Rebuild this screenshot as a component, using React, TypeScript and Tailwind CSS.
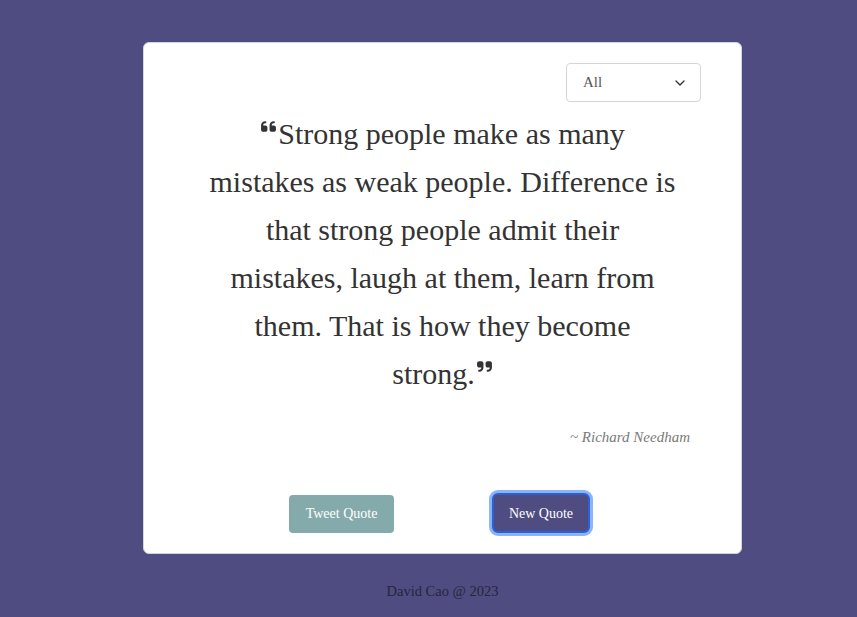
import { ChevronDown } from "lucide-react";

function QuoteLeft({ className }: { className?: string }) {
  return (
    <svg viewBox="0 0 448 512" className={className} fill="currentColor">
      <path d="M0 216C0 149.7 53.7 96 120 96h8c17.7 0 32 14.3 32 32s-14.3 32-32 32h-8c-30.9 0-56 25.1-56 56v8h64c35.3 0 64 28.7 64 64v64c0 35.3-28.7 64-64 64H64c-35.3 0-64-28.7-64-64V216zm256 0c0-66.3 53.7-120 120-120h8c17.7 0 32 14.3 32 32s-14.3 32-32 32h-8c-30.9 0-56 25.1-56 56v8h64c35.3 0 64 28.7 64 64v64c0 35.3-28.7 64-64 64h-64c-35.3 0-64-28.7-64-64V216z" />
    </svg>
  );
}

function QuoteRight({ className }: { className?: string }) {
  return (
    <svg viewBox="0 0 448 512" className={className} fill="currentColor">
      <path d="M448 296c0 66.3-53.7 120-120 120h-8c-17.7 0-32-14.3-32-32s14.3-32 32-32h8c30.9 0 56-25.1 56-56v-8h-64c-35.3 0-64-28.7-64-64v-64c0-35.3 28.7-64 64-64h64c35.3 0 64 28.7 64 64v136zm-256 0c0 66.3-53.7 120-120 120h-8c-17.7 0-32-14.3-32-32s14.3-32 32-32h8c30.9 0 56-25.1 56-56v-8H64c-35.3 0-64-28.7-64-64v-64c0-35.3 28.7-64 64-64h64c35.3 0 64 28.7 64 64v136z" />
    </svg>
  );
}

export default function App() {
  return (
    <div
      className="min-h-[617px] w-full bg-[#4f4c82] pt-[42px]"
      style={{ fontFamily: '"Liberation Serif", serif' }}
    >
      {/* Quote card */}
      <div className="ml-[143px] w-[599px] h-[512px] rounded-md border border-gray-300 bg-white flex flex-col">
        <div className="flex justify-end pt-[20px] pr-[40px]">
          <div className="w-[135px] h-[39px] rounded border border-gray-300 flex items-center justify-between pl-[16px] pr-[12px] text-[15px] text-[#555]">
            <span>All</span>
            <ChevronDown className="w-[16px] h-[16px] text-[#333]" strokeWidth={2} />
          </div>
        </div>

        <div className="mx-auto w-[540px] mt-[8px] text-center text-[30px] leading-[48px] text-[#333]">
          <QuoteLeft className="inline-block w-[17px] h-[17px] align-[9px] mr-[1px]" />
          Strong people make as many
          <br />
          mistakes as weak people. Difference is
          <br />
          that strong people admit their
          <br />
          mistakes, laugh at them, learn from
          <br />
          them. That is how they become
          <br />
          strong.
          <QuoteRight className="inline-block w-[17px] h-[17px] align-[9px] ml-[1px]" />
        </div>

        <div className="mt-[28px] pr-[51px] text-right italic text-[15px] text-[#7a7a7a]">
          ~ Richard Needham
        </div>

        <div className="mt-auto mb-[20px] flex items-center">
          <button className="ml-[145px] w-[105px] h-[38px] mt-[1px] rounded bg-[#85aaab] text-white text-[14px]">
            Tweet Quote
          </button>
          <button className="ml-[98px] w-[98px] h-[40px] rounded-md bg-[#4f4c82] text-white text-[14px] border-2 border-[#2d5fd5] ring-[3px] ring-[#8ab4f8]">
            New Quote
          </button>
        </div>
      </div>

      <footer className="mt-[27px] ml-[143px] w-[599px] text-center text-[14.5px] text-[#26263a]">
        David Cao @ 2023
      </footer>
    </div>
  );
}
